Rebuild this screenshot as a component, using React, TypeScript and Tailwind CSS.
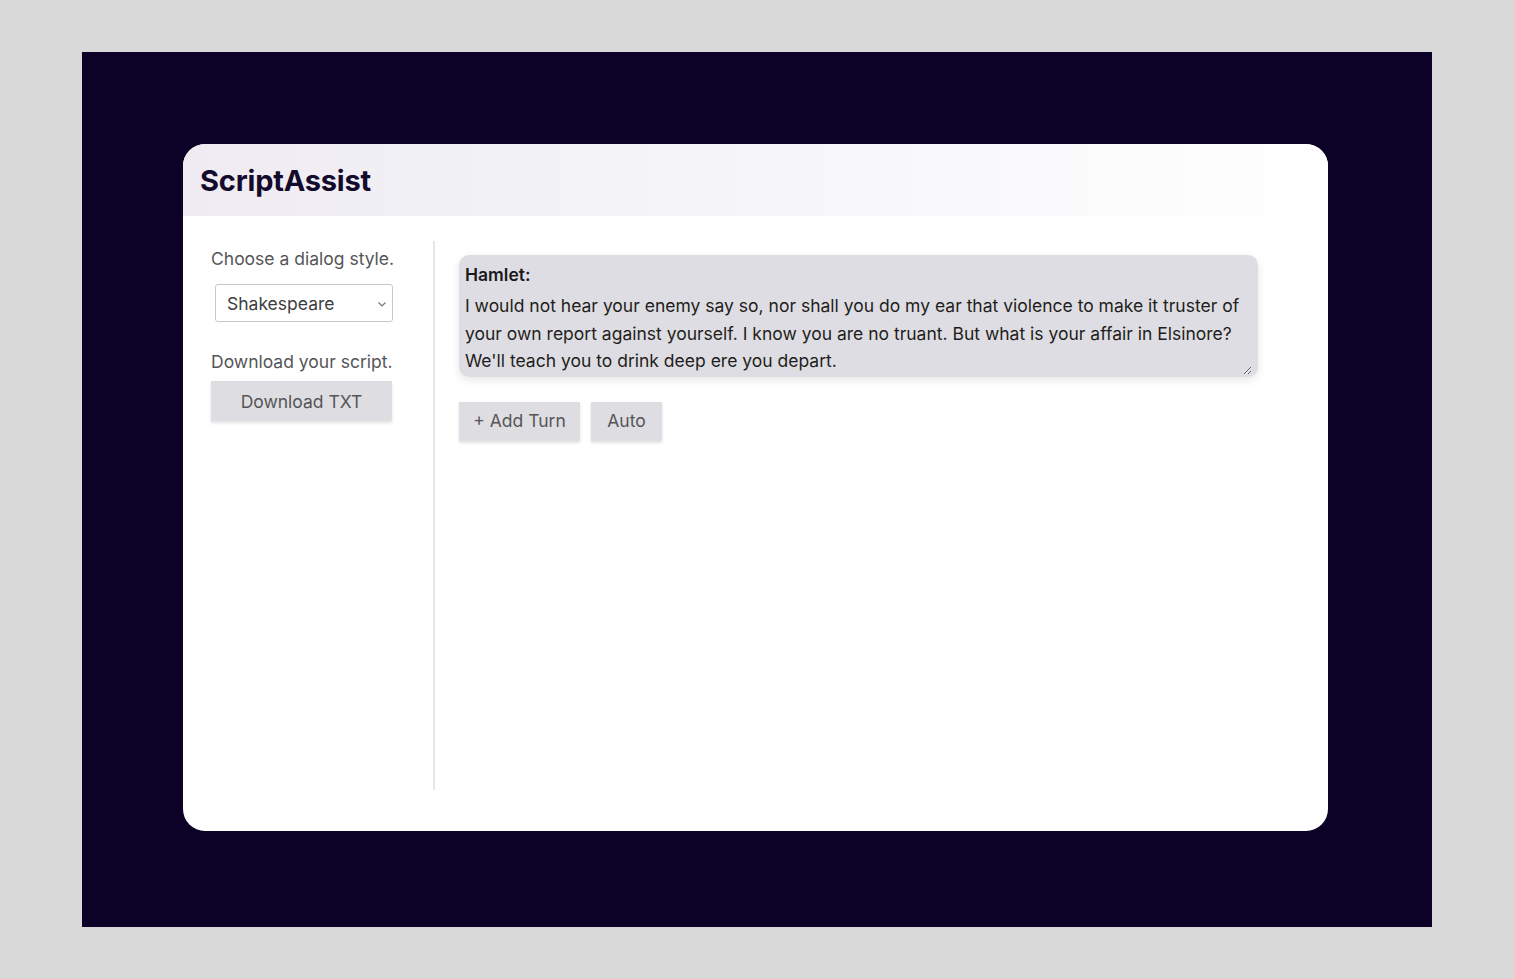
import React from "react";

export default function App() {
  return (
    <div className="min-h-screen w-full bg-[#d9d9d9] flex justify-center pt-[52px]" style={{ fontFamily: "Inter, 'Noto Sans', sans-serif" }}>
      <div className="w-[1350px] h-[875px] bg-[#0c0126] flex pl-[101px] pt-[92px]">
        <div className="w-[1145px] h-[687px] bg-white rounded-[22px] overflow-hidden flex flex-col">
          <div className="h-[72px] shrink-0 bg-gradient-to-r from-[#eeecf2] via-[#f6f5f9] to-[#ffffff] flex items-center px-[17px]">
            <h1 className="text-[29px] font-bold text-[#140b2c] tracking-[-0.2px] pt-[2px]">ScriptAssist</h1>
          </div>
          <div className="flex flex-1 pt-[25px] pb-[41px]">
            <div className="w-[252px] shrink-0 border-r-2 border-[#e6e6e8] pl-[28px] pr-[30px] pt-[4px] flex flex-col">
              <div className="text-[17.5px] text-[#555558] leading-[28px] whitespace-nowrap">Choose a dialog style.</div>
              <div className="pl-[4px] mt-[11px]">
                <div className="relative w-[178px] h-[38px] border border-[#c9c9cd] rounded-[3px] bg-white flex items-center px-[11px] pt-[3px]">
                  <span className="text-[17.5px] text-[#3d3d40]">Shakespeare</span>
                  <svg className="absolute right-[5px] top-[16px]" width="10" height="7" viewBox="0 0 10 7">
                    <path d="M1.5 1.5 L5 5 L8.5 1.5" fill="none" stroke="#777" strokeWidth="1.2" />
                  </svg>
                </div>
              </div>
              <div className="text-[17.5px] text-[#555558] leading-[28px] mt-[26px] whitespace-nowrap">Download your script.</div>
              <button className="mt-[5px] w-[181px] h-[40px] pt-[3px] bg-[#dedde2] text-[17.5px] text-[#555558] shadow-[0_2px_3px_rgba(0,0,0,0.12)]">
                Download TXT
              </button>
            </div>
            <div className="flex-1 pl-[24px] pt-[14px]">
              <div className="w-[799px] rounded-[10px] bg-[#dedde3] shadow-[0_3px_8px_rgba(0,0,0,0.10)] px-[6px] pt-[6px] pb-[2px]">
                <div className="text-[17.5px] font-semibold text-[#1a1a1c] leading-[28px]">Hamlet:</div>
                <textarea
                  className="block w-full bg-transparent outline-none text-[17.5px] text-[#1e1e20] leading-[27.5px] resize-y h-[86px] pt-[3px] overflow-hidden"
                  defaultValue={"I would not hear your enemy say so, nor shall you do my ear that violence to make it truster of your own report against yourself. I know you are no truant. But what is your affair in Elsinore? We'll teach you to drink deep ere you depart."}
                />
              </div>
              <div className="flex gap-[11px] mt-[25px]">
                <button className="w-[121px] h-[39px] bg-[#dedde2] text-[17.5px] text-[#555558] shadow-[0_2px_3px_rgba(0,0,0,0.12)]">+ Add Turn</button>
                <button className="w-[71px] h-[39px] bg-[#dedde2] text-[17.5px] text-[#555558] shadow-[0_2px_3px_rgba(0,0,0,0.12)]">Auto</button>
              </div>
            </div>
          </div>
        </div>
      </div>
    </div>
  );
}
